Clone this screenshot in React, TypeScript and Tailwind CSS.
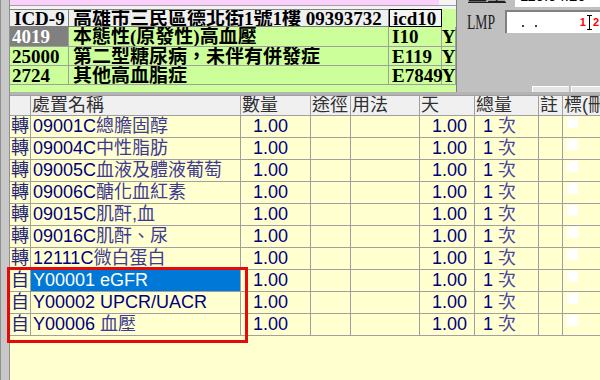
import React from 'react';

const sans = "font-['Liberation_Sans','Noto_Sans_CJK_TC',sans-serif]";
const serif = "font-['Liberation_Serif','Noto_Sans_CJK_TC',serif]";

type IcdRow = { code: string; name: string; icd10: string; flag: string; selected?: boolean; tall?: boolean };

const icdRows: IcdRow[] = [
  { code: '4019', name: '本態性(原發性)高血壓', icd10: 'I10', flag: 'Y', selected: true, tall: true },
  { code: '25000', name: '第二型糖尿病，未伴有併發症', icd10: 'E119', flag: 'Y' },
  { code: '2724', name: '其他高血脂症', icd10: 'E7849', flag: 'Y' },
];

type Order = { src: string; code: string; name: string; light?: boolean; selected?: boolean };

const orders: Order[] = [
  { src: '轉', code: '09001C', name: '總膽固醇', light: true },
  { src: '轉', code: '09004C', name: '中性脂肪', light: true },
  { src: '轉', code: '09005C', name: '血液及體液葡萄', light: true },
  { src: '轉', code: '09006C', name: '醣化血紅素', light: true },
  { src: '轉', code: '09015C', name: '肌酐,血', light: true },
  { src: '轉', code: '09016C', name: '肌酐、尿', light: true },
  { src: '轉', code: '12111C', name: '微白蛋白', light: true },
  { src: '自', code: 'Y00001 ', name: 'eGFR', selected: true },
  { src: '自', code: 'Y00002 ', name: 'UPCR/UACR' },
  { src: '自', code: 'Y00006 ', name: '血壓', light: true },
];

const headers = [
  { label: '', w: 'w-[21px]' },
  { label: '處置名稱', w: 'w-[210px]' },
  { label: '數量', w: 'w-[70px]' },
  { label: '途徑', w: 'w-[40px]' },
  { label: '用法', w: 'w-[69px]' },
  { label: '天', w: 'w-[55px]' },
  { label: '總量', w: 'w-[64px]' },
  { label: '註', w: 'w-[24px]' },
  { label: '標(刪除)', w: 'w-[60px]' },
];

const DiagnosisPanel = () => (
  <div className={`w-[447px] h-[92px] flex flex-col bg-[#ccff99] border-r border-[#808080] ${serif}`}>
    <div className="h-[5px] flex">
      <div className="w-[429px] bg-[#fcd0fc]" />
      <div className="flex-1 bg-[#f4f4f4]" />
    </div>
    <div className="h-[4px] bg-[#f4f4f4] border-t border-[#a0a0a0]" />
    {/* header */}
    <div className="flex h-[18px] text-[19px] font-bold text-black leading-none">
      <div className="w-[59px] bg-[#f0f0f0] border-y border-r border-[#808080] pl-[4px] flex items-center">ICD-9</div>
      <div className="w-[320px] bg-[#f0f0f0] border-y border-r border-[#808080] pl-[4px] flex items-center whitespace-nowrap overflow-hidden">
        高雄市三民區德北街1號1樓 09393732
      </div>
      <div className="w-[53px] bg-[#f4f4f4] border border-black pl-[3px] flex items-center">icd10</div>
    </div>
    {icdRows.map((r) => (
      <div key={r.code} className={`flex ${r.tall ? 'h-[20px]' : 'h-[19px]'} text-[19px] font-bold leading-none`}>
        <div
          className={`w-[59px] border-r border-b border-[#a0a0a0] pl-[2px] flex items-center ${
            r.selected ? 'bg-[#808080] text-white' : 'text-black'
          }`}
        >
          {r.code}
        </div>
        <div className="w-[320px] border-r border-b border-[#a0a0a0] pl-[4px] flex items-center whitespace-nowrap overflow-hidden text-black">
          {r.name}
        </div>
        <div className="w-[53px] border-r border-b border-[#a0a0a0] pl-[3px] flex items-center text-black">{r.icd10}</div>
        <div className="w-[14px] border-r border-b border-[#a0a0a0] flex items-center justify-center text-black">{r.flag}</div>
      </div>
    ))}
  </div>
);

const SidePanel = () => (
  <div className={`flex-1 h-[92px] bg-[#c0c0c0] flex flex-col ${serif}`}>
    <div className="h-[7px] flex overflow-hidden">
      <div className="w-[58px] pl-[11px] overflow-hidden">
        <div className="-mt-[15px] text-[19px] leading-none text-[#202020] underline">血型</div>
      </div>
      <div className="flex-1 bg-white overflow-hidden pl-[5px]">
        <div className={`-mt-[12px] text-[15px] leading-none text-black ${sans}`}>110.04.26</div>
      </div>
    </div>
    <div className="mt-[3px] flex items-center h-[23px]">
      <div className="w-[48px] pl-[10px] text-[20px] leading-none text-[#202020]">
        <span className="inline-block origin-left scale-x-[0.68]">LMP</span>
      </div>
      <div className="flex-1 h-[23px] bg-white border-t-2 border-l-2 border-[#808080] flex items-center relative">
        <span className="absolute left-[15px] top-[13px] w-[2px] h-[2px] bg-[#404040]" />
        <span className="absolute left-[28px] top-[13px] w-[2px] h-[2px] bg-[#404040]" />
        <div className={`ml-auto flex items-center gap-[1px] pr-[1px] text-[11px] font-bold text-[#ff0000] leading-none ${sans}`}>
          <span>1</span>
          <svg width="5" height="15" viewBox="0 0 5 15">
            <path d="M0 0.5h5M2.5 0.5v14M0 14.5h5" stroke="#000" strokeWidth="1" fill="none" />
          </svg>
          <span>2</span>
        </div>
      </div>
    </div>
    <div className="mt-auto flex gap-[2px] pl-[75px]">
      <div className="w-[37px] h-[6px] bg-[#e4e4e4] border-t border-l border-white" />
      <div className="flex-1 h-[6px] bg-[#e4e4e4] border-t border-l border-white" />
    </div>
  </div>
);

const OrderTable = () => (
  <div className={`flex flex-col ${sans}`}>
    <div className="flex h-[21px] bg-[#f0f0f0] border-y border-[#a0a0a0] text-[18px] leading-[19px] text-[#303030]">
      {headers.map((h, i) => (
        <div key={i} className={`${h.w} shrink-0 border-r border-[#a0a0a0] pl-[1px] whitespace-nowrap overflow-hidden`}>
          {h.label}
        </div>
      ))}
    </div>
    {orders.map((o) => (
      <div key={o.code} className="flex h-[22px] border-b border-[#a0a0a0] text-[18px] leading-[21px] text-[#000080]">
        <div className="w-[21px] shrink-0 border-r border-[#a0a0a0] text-center text-[#24247a]">{o.src}</div>
        <div
          className={`w-[210px] shrink-0 border-r border-[#a0a0a0] pl-[2px] whitespace-nowrap overflow-hidden ${
            o.selected ? 'bg-[#0078d7] text-white' : ''
          }`}
        >
          {o.code}
          <span className={o.light ? 'text-[#3e3a94]' : ''}>{o.name}</span>
        </div>
        <div className="w-[70px] shrink-0 border-r border-[#a0a0a0] text-right pr-[22px]">1.00</div>
        <div className="w-[40px] shrink-0 border-r border-[#a0a0a0]" />
        <div className="w-[69px] shrink-0 border-r border-[#a0a0a0]" />
        <div className="w-[55px] shrink-0 border-r border-[#a0a0a0] text-right pr-[7px]">1.00</div>
        <div className="w-[64px] shrink-0 border-r border-[#a0a0a0] pl-[8px] whitespace-nowrap">
          1 <span className="text-[#4a46a0]">次</span>
        </div>
        <div className="w-[24px] shrink-0 border-r border-[#a0a0a0]" />
        <div className="w-[60px] shrink-0 pl-[4px] pt-[1px]">
          <div className="w-[11px] h-[11px] bg-white" />
        </div>
      </div>
    ))}
  </div>
);

export default function App() {
  return (
    <div className="relative w-[600px] h-[380px] overflow-hidden flex bg-[#ffffd0]">
      <div className="w-[10px] shrink-0 bg-[#c8c8c8] border-l border-r border-[#909090]" />
      <div className="flex-1 flex flex-col min-w-0">
        <div className="flex">
          <DiagnosisPanel />
          <SidePanel />
        </div>
        <div className="h-[3px] bg-[#b4b4b4]" />
        <OrderTable />
      </div>
      <div className="absolute left-[7px] top-[267px] w-[241px] h-[76px] border-[3px] border-[#e40a0a]" />
    </div>
  );
}
